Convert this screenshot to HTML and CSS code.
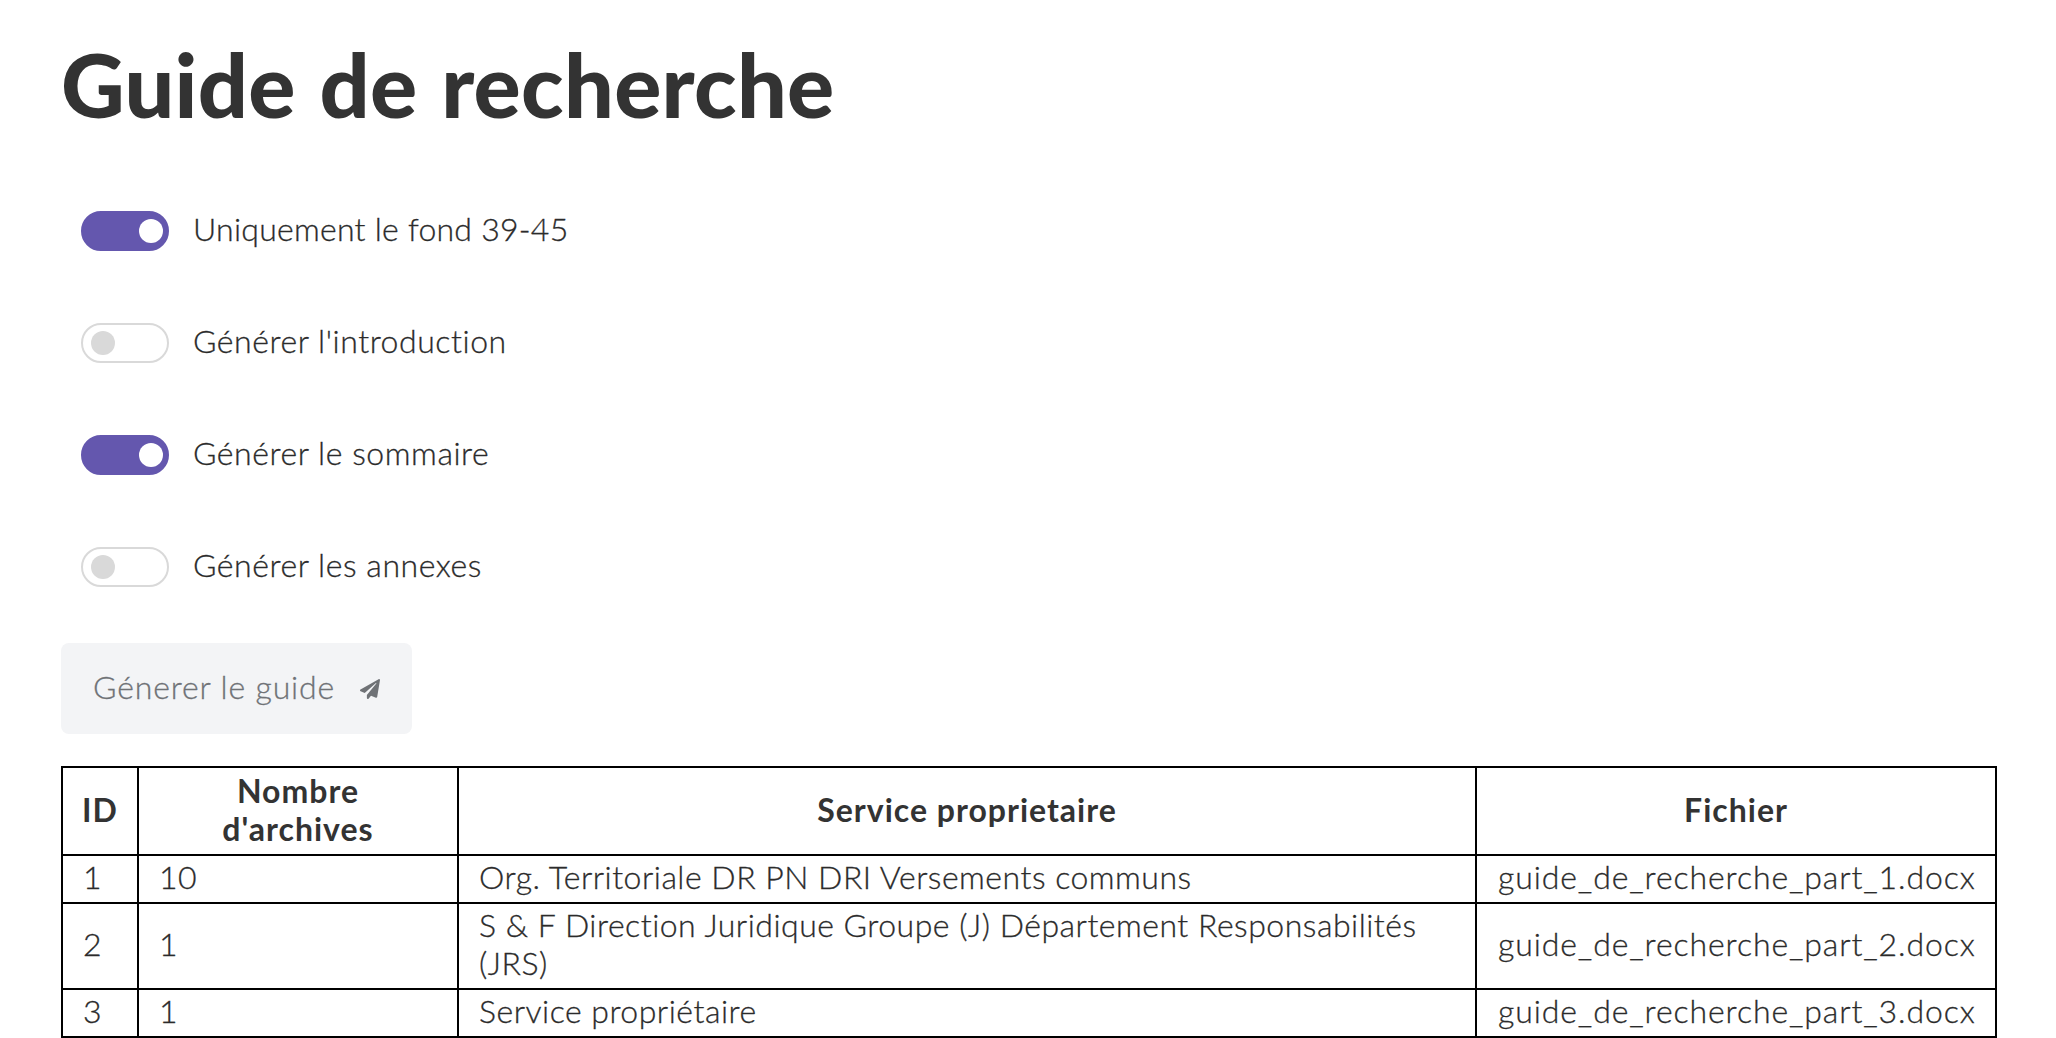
FILE: index.html
```html
<!DOCTYPE html>
<html lang="fr">
<head>
    <meta charset="UTF-8">
    <title>Guide de recherche</title>
    <link rel="stylesheet" href="styles.css">
</head>
<body>
    <div class="container">
        <h1>Guide de recherche</h1>
        <div class="options">
            <label class="option narrow"><span class="toggle on"><span class="knob"></span></span><span class="label">Uniquement le fond 39-45</span></label>
            <label class="option"><span class="toggle"><span class="knob"></span></span><span class="label">Générer l'introduction</span></label>
            <label class="option"><span class="toggle on"><span class="knob"></span></span><span class="label">Générer le sommaire</span></label>
            <label class="option"><span class="toggle"><span class="knob"></span></span><span class="label">Générer les annexes</span></label>
        </div>
        <button class="generate" disabled>
            <span class="label">Génerer le guide</span>
            <svg class="plane" viewBox="0 0 512 512"><path d="M476 3.2L12.5 270.6c-18.1 10.4-15.8 35.6 2.2 43.2L121 358.4l287.3-253.2c5.5-4.9 13.3 2.6 8.6 8.3L176 407v80.5c0 23.6 28.5 32.9 42.5 15.8L282 426l124.6 52.2c14.2 6 30.4-2.9 33-18.2l72-432C515 7.8 493.3-6.8 476 3.2z"/></svg>
        </button>
        <table class="results">
            <thead>
                <tr>
                    <th class="col-id">ID</th>
                    <th class="col-count">Nombre<br>d'archives</th>
                    <th>Service proprietaire</th>
                    <th class="col-file">Fichier</th>
                </tr>
            </thead>
            <tbody>
                <tr>
                    <td>1</td>
                    <td>10</td>
                    <td>Org. Territoriale DR PN DRI Versements communs</td>
                    <td class="file">guide_de_recherche_part_1.docx</td>
                </tr>
                <tr>
                    <td>2</td>
                    <td>1</td>
                    <td>S &amp; F Direction Juridique Groupe (J) Département Responsabilités (JRS)</td>
                    <td class="file">guide_de_recherche_part_2.docx</td>
                </tr>
                <tr>
                    <td>3</td>
                    <td>1</td>
                    <td>Service propriétaire</td>
                    <td class="file">guide_de_recherche_part_3.docx</td>
                </tr>
            </tbody>
        </table>
    </div>
</body>
</html>
```

FILE: styles.css
```css
html, body {
    margin: 0;
    padding: 0;
    background-color: #fff;
    overflow: hidden;
}
body {
    font-family: "Lato", "Open Sans", sans-serif;
    font-size: 32px;
    font-weight: 300;
    -webkit-text-stroke: 0.3px;
    color: #2b2b2b;
}
.container {
    padding: 0 59px 0 61px;
}
h1 {
    margin: 0;
    padding-top: 34px;
    height: 137px;
    box-sizing: border-box;
    font-size: 88px;
    line-height: 100px;
    font-weight: 900;
    letter-spacing: 0.3px;
    word-spacing: 2.5px;
    -webkit-text-stroke: 0;
    color: #333;
}
.options {
    padding: 74px 0 0 20px;
}
.option {
    display: flex;
    align-items: center;
    gap: 24px;
    height: 40px;
    margin-bottom: 72px;
    letter-spacing: 0.55px;
}
.option.narrow {
    letter-spacing: 0.25px;
}
.option:last-child {
    margin-bottom: 56px;
}
.label {
    padding-bottom: 5px;
}
.toggle {
    display: flex;
    align-items: center;
    box-sizing: border-box;
    width: 88px;
    height: 40px;
    padding: 0 8px;
    border: 2px solid #d9d9d9;
    border-radius: 20px;
    background-color: #fff;
}
.toggle.on {
    justify-content: flex-end;
    padding: 0 4px;
    border-color: #6457ae;
    background-color: #6457ae;
}
.knob {
    width: 24px;
    height: 24px;
    border-radius: 50%;
    background-color: #d9d9d9;
}
.toggle.on .knob {
    background-color: #fff;
}
.generate {
    display: flex;
    align-items: center;
    gap: 25px;
    width: 351px;
    height: 91px;
    padding: 0 0 0 32px;
    border: none;
    border-radius: 8px;
    background-color: #f3f4f6;
    color: #6f7276;
    font: inherit;
    letter-spacing: 0.85px;
}
.plane {
    width: 20px;
    height: 20px;
    fill: #6f7276;
}
.results {
    width: 100%;
    margin-top: 32px;
    border-collapse: collapse;
    table-layout: fixed;
    line-height: 38px;
    letter-spacing: 0.5px;
}
.results th, .results td {
    border: 2px solid #000;
    padding: 2px 20px 6px;
    box-sizing: border-box;
}
.results th {
    font-weight: 700;
    text-align: center;
    padding: 4px 8px 6px;
    letter-spacing: 1px;
    -webkit-text-stroke: 0;
    color: #333;
}
.results .file {
    padding-left: 21px;
    padding-right: 21px;
    letter-spacing: 0.9px;
    white-space: nowrap;
}
.col-id {
    width: 76px;
}
.col-count {
    width: 320px;
}
.col-file {
    width: 520px;
}
```
